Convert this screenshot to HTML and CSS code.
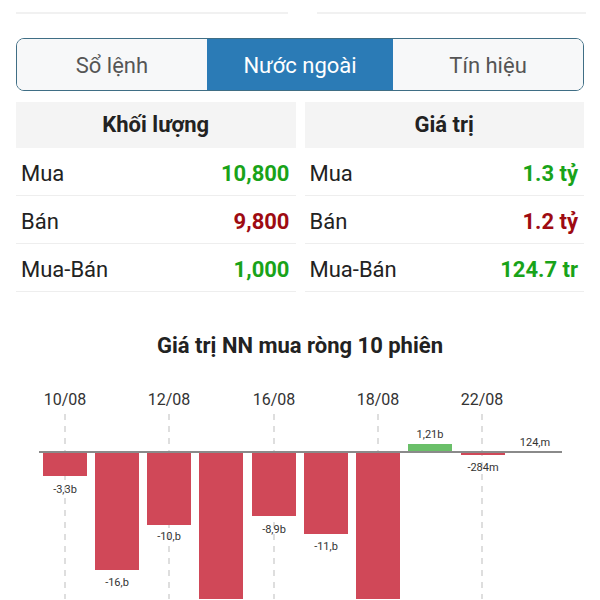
FILE: index.html
```html
<!DOCTYPE html>
<html lang="vi">
<head>
    <meta charset="UTF-8">
    <meta name="viewport" content="width=device-width, initial-scale=1.0">
    <title>Nước ngoài</title>
    <link rel="stylesheet" href="styles.css">
</head>
<body>
    <div class="page">
        <!-- Previous section (cut off) -->
        <div class="prev-row">
            <div class="prev-cell"></div>
            <div class="prev-cell"></div>
        </div>

        <!-- Tabs -->
        <div class="tabs">
            <button class="tab">Sổ lệnh</button>
            <button class="tab active">Nước ngoài</button>
            <button class="tab">Tín hiệu</button>
        </div>

        <!-- Foreign trading stats -->
        <div class="stats">
            <div class="stat-table">
                <div class="stat-head">Khối lượng</div>
                <div class="stat-row"><span>Mua</span><span class="val up">10,800</span></div>
                <div class="stat-row"><span>Bán</span><span class="val down">9,800</span></div>
                <div class="stat-row"><span>Mua-Bán</span><span class="val up">1,000</span></div>
            </div>
            <div class="stat-table">
                <div class="stat-head">Giá trị</div>
                <div class="stat-row"><span>Mua</span><span class="val up">1.3 tỷ</span></div>
                <div class="stat-row"><span>Bán</span><span class="val down">1.2 tỷ</span></div>
                <div class="stat-row"><span>Mua-Bán</span><span class="val up">124.7 tr</span></div>
            </div>
        </div>

        <!-- Chart -->
        <h2 class="chart-title">Giá trị NN mua ròng 10 phiên</h2>
        <svg class="chart" width="600" height="230" viewBox="0 0 600 230">
            <g class="dates">
                <text x="65" y="36">10/08</text>
                <text x="169" y="36">12/08</text>
                <text x="274" y="36">16/08</text>
                <text x="378" y="36">18/08</text>
                <text x="482" y="36">22/08</text>
            </g>
            <g class="grid">
                <line x1="65" y1="45" x2="65" y2="230"/>
                <line x1="169" y1="45" x2="169" y2="230"/>
                <line x1="274" y1="45" x2="274" y2="230"/>
                <line x1="378" y1="45" x2="378" y2="230"/>
                <line x1="482" y1="45" x2="482" y2="230"/>
            </g>
            <g class="bars-neg">
                <rect x="43" y="83" width="44" height="24"/>
                <rect x="95" y="83" width="44" height="118"/>
                <rect x="147" y="83" width="44" height="73"/>
                <rect x="199" y="83" width="44" height="160"/>
                <rect x="252" y="83" width="44" height="64"/>
                <rect x="304" y="83" width="44" height="82"/>
                <rect x="356" y="83" width="44" height="160"/>
                <rect x="461" y="83" width="44" height="3"/>
            </g>
            <g class="bars-pos">
                <rect x="408" y="75" width="44" height="8"/>
            </g>
            <line class="axis" x1="39" y1="83" x2="562" y2="83"/>
            <g class="values">
                <text x="65" y="124">-3,3b</text>
                <text x="117" y="217">-16,b</text>
                <text x="169" y="171">-10,b</text>
                <text x="274" y="164">-8,9b</text>
                <text x="326" y="181">-11,b</text>
                <text x="430" y="69">1,21b</text>
                <text x="483" y="102">-284m</text>
                <text x="535" y="77">124,m</text>
            </g>
        </svg>
    </div>
</body>
</html>
```

FILE: styles.css
```css
/* General */
html, body {
    margin: 0;
    padding: 0;
    background: #fff;
}
body {
    font-family: Roboto, "Noto Sans", sans-serif;
    color: #222;
    overflow: hidden;
}
.page {
    padding: 0 16px;
}

/* Previous section */
.prev-row {
    display: grid;
    grid-template-columns: 272px 1fr;
    gap: 29px;
    margin-right: -2px;
    height: 14px;
}
.prev-cell {
    border-bottom: 2px solid #f1f1f1;
}

/* Tabs */
.tabs {
    display: flex;
    margin-top: 24px;
    height: 53px;
    border: 1.5px solid #3f6e85;
    border-radius: 8px;
    overflow: hidden;
    box-sizing: border-box;
}
.tab {
    flex: 1;
    border: none;
    margin: 0;
    padding: 2px 0 0;
    background: #f7f8f9;
    color: #555;
    font-family: Roboto, sans-serif;
    font-size: 22px;
    font-weight: 400;
}
.tab.active {
    flex: 0.98;
    background: #2b7bb6;
    color: #fff;
}

/* Stats tables */
.stats {
    display: grid;
    grid-template-columns: 1fr 1fr;
    gap: 9px;
    margin-top: 11px;
}
.stat-head {
    height: 46px;
    line-height: 46px;
    background: #f4f4f4;
    text-align: center;
    font-size: 22px;
    font-weight: 700;
    color: #222;
}
.stat-row {
    display: flex;
    justify-content: space-between;
    align-items: center;
    height: 48px;
    padding: 4px 6px 0 5px;
    box-sizing: border-box;
    border-bottom: 1px solid #eeeeee;
    font-size: 22px;
    color: #222;
}
.val {
    font-weight: 700;
}
.up {
    color: #19a319;
}
.down {
    color: #9e0b12;
}

/* Chart */
.chart-title {
    margin: 42px 0 11px;
    line-height: 24px;
    text-align: center;
    font-size: 22px;
    font-weight: 700;
    color: #222;
}
.chart {
    display: block;
    margin: 0 -16px;
    font-family: Roboto, sans-serif;
}
.dates text {
    font-size: 16px;
    fill: #333;
    text-anchor: middle;
}
.grid line {
    stroke: #bdbdbd;
    stroke-width: 1;
    stroke-dasharray: 6 6;
}
.bars-neg rect {
    fill: #d04858;
}
.bars-pos rect {
    fill: #6abf69;
}
.axis {
    stroke: #8a8a8a;
    stroke-width: 2;
}
.values text {
    font-size: 11px;
    fill: #333;
    text-anchor: middle;
}
```
